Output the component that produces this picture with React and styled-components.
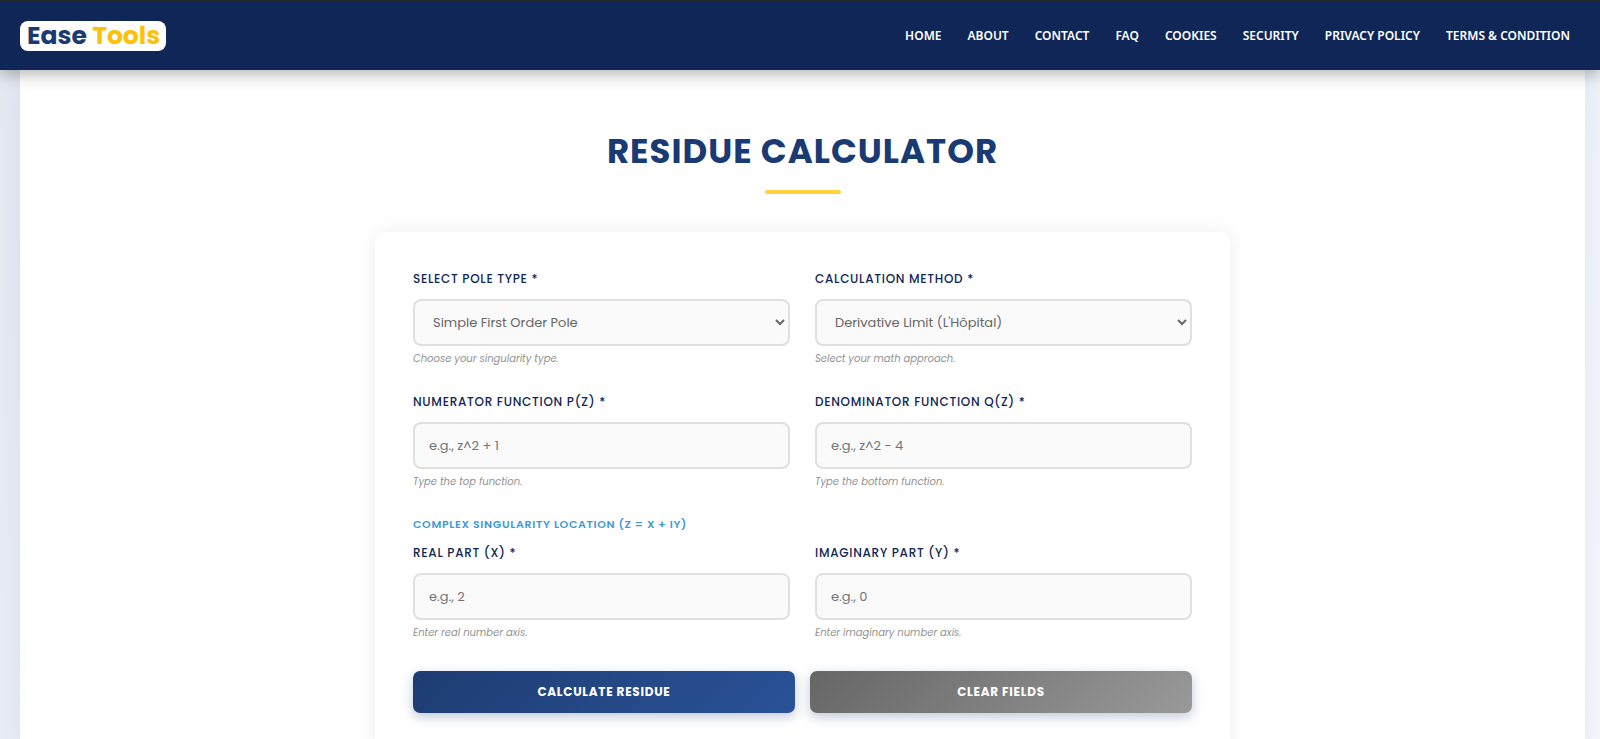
import React from "react";
import styled, { createGlobalStyle } from "styled-components";

const GlobalStyle = createGlobalStyle`
  *, *::before, *::after { box-sizing: border-box; }
  body {
    margin: 0;
    font-family: Poppins, Inter, "Liberation Sans", sans-serif;
    background: linear-gradient(135deg, #e3e8f1 0%, #f3f6fb 100%);
  }
`;

const Header = styled.header`
  position: relative;
  z-index: 1;
  display: flex;
  align-items: center;
  justify-content: space-between;
  min-height: 70px;
  padding: 0 30px 0 20px;
  border-top: 2px solid #25282b;
  background: #0f2656;
  box-shadow: 0 4px 15px rgba(0, 0, 0, 0.3);
`;

const Logo = styled.a`
  padding: 0 6px 0 7px;
  border-radius: 8px;
  background: #fff;
  color: #1b3a70;
  font-size: 25px;
  font-weight: 700;
  line-height: 30px;
  text-decoration: none;
  white-space: nowrap;
`;

const LogoAccent = styled.span`
  color: #ffc107;
`;

const Nav = styled.nav`
  display: flex;
  gap: 26px;
`;

const NavLink = styled.a`
  color: #fff;
  font-family: "Noto Sans", "Open Sans", sans-serif;
  font-size: 12px;
  font-weight: 600;
  line-height: 18px;
  text-decoration: none;
  white-space: nowrap;
`;

const Page = styled.main`
  margin: 0 15px 0 20px;
  padding: 60px 20px 0;
  background: #fff;
  box-shadow: 0 0 20px rgba(20, 50, 110, 0.06);
`;

const Title = styled.h1`
  margin: 0;
  color: #1a3a73;
  font-size: 34px;
  font-weight: 700;
  letter-spacing: 1px;
  line-height: 42px;
  text-align: center;
`;

const Underline = styled.div`
  width: 76px;
  height: 4px;
  margin: 18px auto 38px;
  border-radius: 2px;
  background: #ffd43b;
`;

const Card = styled.form`
  max-width: 855px;
  margin: 0 auto;
  padding: 38px;
  border-radius: 10px;
  background: #fff;
  box-shadow: 0 0 20px rgba(0, 0, 0, 0.07);
`;

const FieldRow = styled.div`
  display: grid;
  grid-template-columns: 1fr 1fr;
  gap: 25px;
  margin-bottom: ${(p) => p.$gap}px;
`;

const Field = styled.div`
  display: flex;
  flex-direction: column;
`;

const Label = styled.label`
  margin-bottom: 11px;
  color: #0f2656;
  font-size: 12px;
  font-weight: 500;
  letter-spacing: 0.06em;
  line-height: 18px;
`;

const controlStyles = `
  width: 100%;
  height: 47px;
  padding: 0 14px;
  border: 2px solid #e0e0e0;
  border-radius: 8px;
  background: #fafafa;
  color: #666;
  font-family: inherit;
  font-size: 13px;
`;

const Input = styled.input`
  ${controlStyles}
  &::placeholder { color: #757575; opacity: 1; }
`;

const Select = styled.select`
  ${controlStyles}
  padding-right: 0;
`;

const Help = styled.small`
  margin-top: 4px;
  color: #929292;
  font-size: 10px;
  font-style: italic;
  line-height: 18px;
`;

const SectionTitle = styled.h2`
  margin: 0 0 11px;
  color: #4299d8;
  font-size: 11px;
  font-weight: 600;
  letter-spacing: 0.06em;
  line-height: 18px;
`;

const Actions = styled.div`
  display: grid;
  grid-template-columns: 1fr 1fr;
  gap: 15px;
`;

const Button = styled.button`
  height: 42px;
  border: 0;
  border-radius: 7px;
  background: ${(p) =>
    p.$muted
      ? "linear-gradient(135deg, #666, #999)"
      : "linear-gradient(135deg, #1e3c72, #2a5298)"};
  box-shadow: 0 4px 12px rgba(30, 60, 114, 0.28);
  color: #fff;
  font-family: inherit;
  font-size: 12px;
  font-weight: 700;
  letter-spacing: 0.06em;
`;

const links = ["HOME", "ABOUT", "CONTACT", "FAQ", "COOKIES", "SECURITY", "PRIVACY POLICY", "TERMS & CONDITION"];

function TextField({ id, label, placeholder, help }) {
  return (
    <Field>
      <Label htmlFor={id}>{label}</Label>
      <Input id={id} type="text" placeholder={placeholder} />
      <Help>{help}</Help>
    </Field>
  );
}

function SelectField({ id, label, option, help }) {
  return (
    <Field>
      <Label htmlFor={id}>{label}</Label>
      <Select id={id}>
        <option>{option}</option>
      </Select>
      <Help>{help}</Help>
    </Field>
  );
}

export default function App() {
  return (
    <>
      <GlobalStyle />
      <Header>
        <Logo href="#">
          Ease <LogoAccent>Tools</LogoAccent>
        </Logo>
        <Nav>
          {links.map((link) => (
            <NavLink key={link} href="#">{link}</NavLink>
          ))}
        </Nav>
      </Header>
      <Page>
        <Title>RESIDUE CALCULATOR</Title>
        <Underline />
        <Card onSubmit={(e) => e.preventDefault()}>
          <FieldRow $gap={25}>
            <SelectField id="pole" label="SELECT POLE TYPE *" option="Simple First Order Pole" help="Choose your singularity type." />
            <SelectField id="method" label="CALCULATION METHOD *" option="Derivative Limit (L'Hôpital)" help="Select your math approach." />
          </FieldRow>
          <FieldRow $gap={24}>
            <TextField id="numerator" label="NUMERATOR FUNCTION P(Z) *" placeholder="e.g., z^2 + 1" help="Type the top function." />
            <TextField id="denominator" label="DENOMINATOR FUNCTION Q(Z) *" placeholder="e.g., z^2 - 4" help="Type the bottom function." />
          </FieldRow>
          <SectionTitle>COMPLEX SINGULARITY LOCATION (Z = X + IY)</SectionTitle>
          <FieldRow $gap={29}>
            <TextField id="real" label="REAL PART (X) *" placeholder="e.g., 2" help="Enter real number axis." />
            <TextField id="imaginary" label="IMAGINARY PART (Y) *" placeholder="e.g., 0" help="Enter imaginary number axis." />
          </FieldRow>
          <Actions>
            <Button type="submit">CALCULATE RESIDUE</Button>
            <Button type="reset" $muted>CLEAR FIELDS</Button>
          </Actions>
        </Card>
      </Page>
    </>
  );
}
